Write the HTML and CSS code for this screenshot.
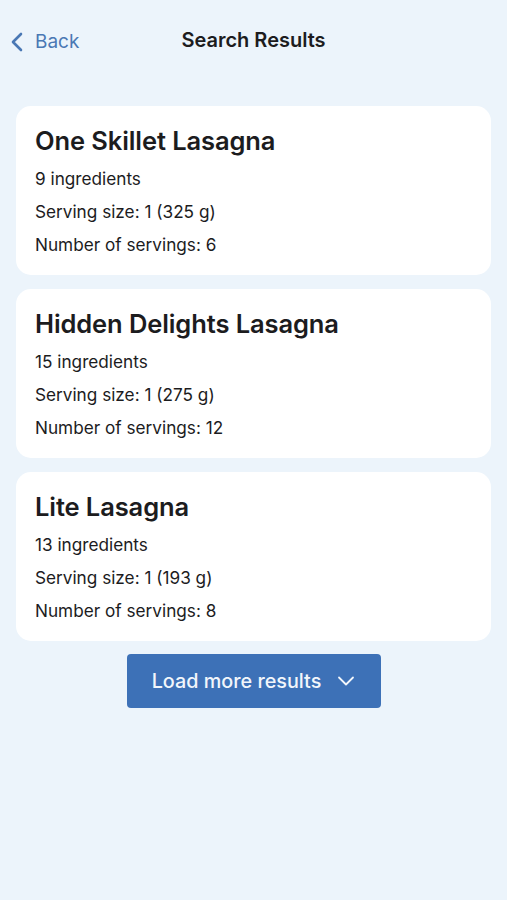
FILE: index.html
```html
<!DOCTYPE html>
<html lang="en">
<head>
  <meta charset="UTF-8">
  <title>Search Results</title>
  <link rel="stylesheet" href="styles.css">
</head>
<body>

  <div class="nav-bar">
    <a class="back-link" href="#">
      <svg class="back-icon" width="12" height="20" viewBox="0 0 12 20">
        <path d="M10 2 L2 10 L10 18" fill="none" stroke="currentColor" stroke-width="2.6" stroke-linecap="round" stroke-linejoin="round"/>
      </svg>
      <span>Back</span>
    </a>
    <h1 class="nav-title">Search Results</h1>
  </div>

  <div class="results">
    <div class="recipe-card">
      <h2>One Skillet Lasagna</h2>
      <p>9 ingredients</p>
      <p>Serving size: 1 (325 g)</p>
      <p>Number of servings: 6</p>
    </div>

    <div class="recipe-card">
      <h2>Hidden Delights Lasagna</h2>
      <p>15 ingredients</p>
      <p>Serving size: 1 (275 g)</p>
      <p>Number of servings: 12</p>
    </div>

    <div class="recipe-card">
      <h2>Lite Lasagna</h2>
      <p>13 ingredients</p>
      <p>Serving size: 1 (193 g)</p>
      <p>Number of servings: 8</p>
    </div>
  </div>

  <div class="load-more-row">
    <button class="load-more">
      Load more results
      <svg width="18" height="10" viewBox="0 0 18 10">
        <path d="M2 1.5 L9 8.5 L16 1.5" fill="none" stroke="currentColor" stroke-width="1.8" stroke-linecap="round" stroke-linejoin="round"/>
      </svg>
    </button>
  </div>

</body>
</html>
```

FILE: styles.css
```css
body {
  margin: 0;
  font-family: Inter, "Noto Sans", sans-serif;
  background-color: #ecf4fb;
  color: #1c1c1e;
  min-height: 900px;
}

.nav-bar {
  position: relative;
  height: 80px;
  display: flex;
  align-items: center;
  justify-content: center;
}

.back-link {
  position: absolute;
  left: 11px;
  top: 30px;
  display: flex;
  align-items: center;
  gap: 12px;
  color: #4a78b4;
  text-decoration: none;
  font-size: 19px;
}

.nav-title {
  margin: 0;
  font-size: 20px;
  font-weight: 600;
}

.results {
  margin-top: 26px;
  padding: 0 16px;
  display: flex;
  flex-direction: column;
  gap: 14px;
}

.recipe-card {
  background-color: #ffffff;
  border-radius: 15px;
  padding: 20px 19px 14px;
}

.recipe-card h2 {
  margin: 0 0 6px;
  font-size: 25.5px;
  line-height: 30px;
  font-weight: 600;
  letter-spacing: -0.1px;
}

.recipe-card p {
  margin: 0;
  font-size: 17.2px;
  line-height: 33px;
}

.load-more-row {
  display: flex;
  justify-content: center;
  margin-top: 13px;
}

.load-more {
  width: 254px;
  height: 54px;
  border: none;
  border-radius: 4px;
  background-color: #3d71b7;
  color: #f2f6fb;
  font-family: inherit;
  font-size: 19.8px;
  font-weight: 500;
  display: flex;
  align-items: center;
  justify-content: center;
  gap: 16px;
  cursor: pointer;
}
```
